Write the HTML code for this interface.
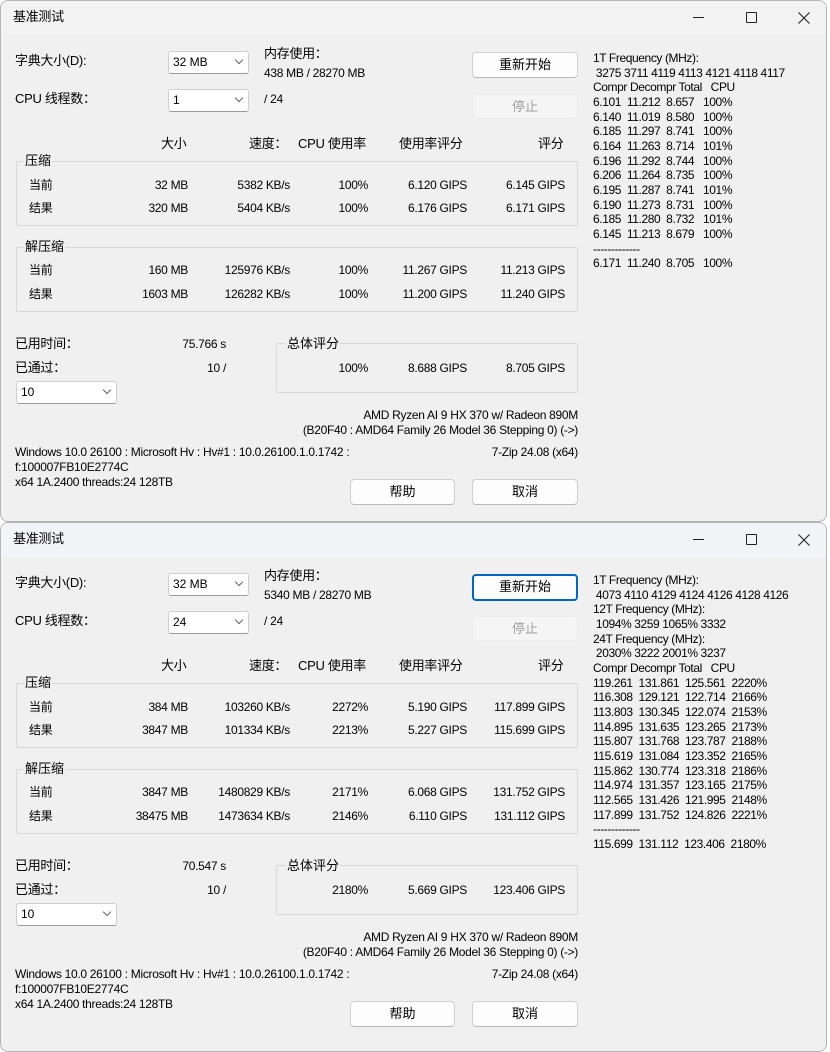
<!DOCTYPE html>
<html><head><meta charset="utf-8"><style>
*{margin:0;padding:0;box-sizing:border-box}
body{width:830px;height:1044px;background:#fff;position:relative;overflow:hidden;font-family:"Liberation Sans","Noto Sans CJK SC",sans-serif;font-size:12px;color:#000}
.win{position:absolute;left:0;width:827px;border:1px solid #b5b5b5;border-radius:8px;background:#f0f0f0;overflow:hidden}
.tb{position:absolute;left:0;top:0;right:0;height:34px;background:#f3f3f3}
.a{position:absolute;white-space:nowrap;line-height:14px;letter-spacing:-0.3px}
.r{text-align:right}
.cb{position:absolute;background:#fff;border:1px solid #cfcfcf;border-bottom-color:#999;border-radius:3px}
.cb span{position:absolute;left:4px;top:3px;line-height:14px}
.cb i{position:absolute;right:6px;top:5px;width:6px;height:6px;border-right:1px solid #666;border-bottom:1px solid #666;transform:rotate(45deg)}
.btn{position:absolute;background:#fdfdfd;border:1px solid #d0d0d0;border-bottom-color:#b8b8b8;border-radius:4px;text-align:center;line-height:24px;font-size:13px}
.dis{background:#f5f5f5;border-color:#ececec;color:#a0a0a0}
.foc{border:2px solid #0067c0;line-height:22px}
.gb{position:absolute;border:1px solid #d8d8d8;border-radius:2px}
.gl{position:absolute;background:#f0f0f0;padding:0 1px;line-height:14px;font-size:13px}
.mono{position:absolute;left:592px;line-height:14.65px;white-space:pre;letter-spacing:-0.4px}
.x{position:absolute;left:797px;top:11px}
</style></head><body>

<!-- TOP WINDOW -->
<div class="win" style="top:0;height:522px">
<div class="tb"></div>
<div class="a" style="left:12px;top:9px;font-size:13px">基准测试</div>
<div class="a" style="left:692px;top:16px;width:11px;border-top:1px solid #222"></div>
<div class="a" style="left:745px;top:11px;width:11px;height:11px;border:1px solid #222;border-radius:1px"></div>
<svg class="x" width="12" height="12" viewBox="0 0 12 12"><path d="M0.5 0.5L11.5 11.5M11.5 0.5L0.5 11.5" stroke="#222" stroke-width="1.1"/></svg>

<div class="a" style="left:14px;top:53px;font-size:13px">字典大小(D):</div>
<div class="cb" style="left:167px;top:50px;width:81px;height:23px"><span>32 MB</span><i></i></div>
<div class="a" style="left:263px;top:46px;font-size:13px">内存使用：</div>
<div class="a" style="left:263px;top:65px">438 MB / 28270 MB</div>
<div class="a" style="left:14px;top:91px;font-size:13px">CPU 线程数：</div>
<div class="cb" style="left:167px;top:88px;width:81px;height:23px"><span>1</span><i></i></div>
<div class="a" style="left:263px;top:91px">/ 24</div>
<div class="btn" style="left:471px;top:51px;width:106px;height:26px">重新开始</div>
<div class="btn dis" style="left:471px;top:93px;width:106px;height:25px">停止</div>

<div class="a" style="left:160px;top:136px;font-size:13px">大小</div>
<div class="a" style="left:248px;top:136px;font-size:13px">速度：</div>
<div class="a" style="left:297px;top:136px;font-size:13px">CPU 使用率</div>
<div class="a" style="left:398px;top:136px;font-size:13px">使用率评分</div>
<div class="a" style="left:537px;top:136px;font-size:13px">评分</div>

<div class="gb" style="left:15px;top:160px;width:562px;height:65px"></div>
<div class="gl" style="left:23px;top:153px">压缩</div>
<div class="a" style="left:28px;top:177px">当前</div>
<div class="a r" style="left:100px;top:177px;width:87px">32 MB</div>
<div class="a r" style="left:190px;top:177px;width:99px">5382 KB/s</div>
<div class="a r" style="left:300px;top:177px;width:67px">100%</div>
<div class="a r" style="left:380px;top:177px;width:86px">6.120 GIPS</div>
<div class="a r" style="left:480px;top:177px;width:84px">6.145 GIPS</div>
<div class="a" style="left:28px;top:200px">结果</div>
<div class="a r" style="left:100px;top:200px;width:87px">320 MB</div>
<div class="a r" style="left:190px;top:200px;width:99px">5404 KB/s</div>
<div class="a r" style="left:300px;top:200px;width:67px">100%</div>
<div class="a r" style="left:380px;top:200px;width:86px">6.176 GIPS</div>
<div class="a r" style="left:480px;top:200px;width:84px">6.171 GIPS</div>

<div class="gb" style="left:15px;top:246px;width:562px;height:65px"></div>
<div class="gl" style="left:23px;top:239px">解压缩</div>
<div class="a" style="left:28px;top:262px">当前</div>
<div class="a r" style="left:100px;top:262px;width:87px">160 MB</div>
<div class="a r" style="left:190px;top:262px;width:99px">125976 KB/s</div>
<div class="a r" style="left:300px;top:262px;width:67px">100%</div>
<div class="a r" style="left:380px;top:262px;width:86px">11.267 GIPS</div>
<div class="a r" style="left:480px;top:262px;width:84px">11.213 GIPS</div>
<div class="a" style="left:28px;top:286px">结果</div>
<div class="a r" style="left:100px;top:286px;width:87px">1603 MB</div>
<div class="a r" style="left:190px;top:286px;width:99px">126282 KB/s</div>
<div class="a r" style="left:300px;top:286px;width:67px">100%</div>
<div class="a r" style="left:380px;top:286px;width:86px">11.200 GIPS</div>
<div class="a r" style="left:480px;top:286px;width:84px">11.240 GIPS</div>

<div class="a" style="left:14px;top:336px;font-size:13px">已用时间：</div>
<div class="a r" style="left:120px;top:336px;width:105px">75.766 s</div>
<div class="a" style="left:14px;top:360px;font-size:13px">已通过：</div>
<div class="a r" style="left:120px;top:360px;width:105px">10 /</div>
<div class="cb" style="left:15px;top:380px;width:101px;height:23px"><span>10</span><i></i></div>
<div class="gb" style="left:275px;top:342px;width:302px;height:50px"></div>
<div class="gl" style="left:285px;top:336px">总体评分</div>
<div class="a r" style="left:300px;top:360px;width:67px">100%</div>
<div class="a r" style="left:380px;top:360px;width:86px">8.688 GIPS</div>
<div class="a r" style="left:480px;top:360px;width:84px">8.705 GIPS</div>

<div class="a r" style="left:277px;top:407px;width:300px">AMD Ryzen AI 9 HX 370 w/ Radeon 890M</div>
<div class="a r" style="left:227px;top:422px;width:350px">(B20F40 : AMD64 Family 26 Model 36 Stepping 0) (-&gt;)</div>
<div class="a" style="left:14px;top:444px">Windows 10.0 26100 : Microsoft Hv : Hv#1 : 10.0.26100.1.0.1742 :</div>
<div class="a r" style="left:427px;top:444px;width:150px">7-Zip 24.08 (x64)</div>
<div class="a" style="left:14px;top:459px">f:100007FB10E2774C</div>
<div class="a" style="left:14px;top:474px">x64 1A.2400 threads:24 128TB</div>
<div class="btn" style="left:349px;top:478px;width:105px;height:26px">帮助</div>
<div class="btn" style="left:471px;top:478px;width:106px;height:26px">取消</div>

<div class="mono" style="top:50px">1T Frequency (MHz):
 3275 3711 4119 4113 4121 4118 4117
Compr Decompr Total   CPU
6.101  11.212  8.657   100%
6.140  11.019  8.580   100%
6.185  11.297  8.741   100%
6.164  11.263  8.714   101%
6.196  11.292  8.744   100%
6.206  11.264  8.735   100%
6.195  11.287  8.741   101%
6.190  11.273  8.731   100%
6.185  11.280  8.732   101%
6.145  11.213  8.679   100%
-------------
6.171  11.240  8.705   100%</div>
</div>

<!-- BOTTOM WINDOW -->
<div class="win" style="top:522px;height:530px">
<div class="tb" style="background:#f3f4f8"></div>
<div class="a" style="left:12px;top:9px;font-size:13px">基准测试</div>
<div class="a" style="left:692px;top:16px;width:11px;border-top:1px solid #222"></div>
<div class="a" style="left:745px;top:11px;width:11px;height:11px;border:1px solid #222;border-radius:1px"></div>
<svg class="x" width="12" height="12" viewBox="0 0 12 12"><path d="M0.5 0.5L11.5 11.5M11.5 0.5L0.5 11.5" stroke="#222" stroke-width="1.1"/></svg>

<div class="a" style="left:14px;top:53px;font-size:13px">字典大小(D):</div>
<div class="cb" style="left:167px;top:50px;width:81px;height:23px"><span>32 MB</span><i></i></div>
<div class="a" style="left:263px;top:46px;font-size:13px">内存使用：</div>
<div class="a" style="left:263px;top:65px">5340 MB / 28270 MB</div>
<div class="a" style="left:14px;top:91px;font-size:13px">CPU 线程数：</div>
<div class="cb" style="left:167px;top:88px;width:81px;height:23px"><span>24</span><i></i></div>
<div class="a" style="left:263px;top:91px">/ 24</div>
<div class="btn foc" style="left:471px;top:51px;width:106px;height:27px">重新开始</div>
<div class="btn dis" style="left:471px;top:93px;width:106px;height:25px">停止</div>

<div class="a" style="left:160px;top:136px;font-size:13px">大小</div>
<div class="a" style="left:248px;top:136px;font-size:13px">速度：</div>
<div class="a" style="left:297px;top:136px;font-size:13px">CPU 使用率</div>
<div class="a" style="left:398px;top:136px;font-size:13px">使用率评分</div>
<div class="a" style="left:537px;top:136px;font-size:13px">评分</div>

<div class="gb" style="left:15px;top:160px;width:562px;height:65px"></div>
<div class="gl" style="left:23px;top:153px">压缩</div>
<div class="a" style="left:28px;top:177px">当前</div>
<div class="a r" style="left:100px;top:177px;width:87px">384 MB</div>
<div class="a r" style="left:190px;top:177px;width:99px">103260 KB/s</div>
<div class="a r" style="left:300px;top:177px;width:67px">2272%</div>
<div class="a r" style="left:380px;top:177px;width:86px">5.190 GIPS</div>
<div class="a r" style="left:470px;top:177px;width:94px">117.899 GIPS</div>
<div class="a" style="left:28px;top:200px">结果</div>
<div class="a r" style="left:100px;top:200px;width:87px">3847 MB</div>
<div class="a r" style="left:190px;top:200px;width:99px">101334 KB/s</div>
<div class="a r" style="left:300px;top:200px;width:67px">2213%</div>
<div class="a r" style="left:380px;top:200px;width:86px">5.227 GIPS</div>
<div class="a r" style="left:470px;top:200px;width:94px">115.699 GIPS</div>

<div class="gb" style="left:15px;top:246px;width:562px;height:65px"></div>
<div class="gl" style="left:23px;top:239px">解压缩</div>
<div class="a" style="left:28px;top:262px">当前</div>
<div class="a r" style="left:100px;top:262px;width:87px">3847 MB</div>
<div class="a r" style="left:190px;top:262px;width:99px">1480829 KB/s</div>
<div class="a r" style="left:300px;top:262px;width:67px">2171%</div>
<div class="a r" style="left:380px;top:262px;width:86px">6.068 GIPS</div>
<div class="a r" style="left:470px;top:262px;width:94px">131.752 GIPS</div>
<div class="a" style="left:28px;top:286px">结果</div>
<div class="a r" style="left:100px;top:286px;width:87px">38475 MB</div>
<div class="a r" style="left:190px;top:286px;width:99px">1473634 KB/s</div>
<div class="a r" style="left:300px;top:286px;width:67px">2146%</div>
<div class="a r" style="left:380px;top:286px;width:86px">6.110 GIPS</div>
<div class="a r" style="left:470px;top:286px;width:94px">131.112 GIPS</div>

<div class="a" style="left:14px;top:336px;font-size:13px">已用时间：</div>
<div class="a r" style="left:120px;top:336px;width:105px">70.547 s</div>
<div class="a" style="left:14px;top:360px;font-size:13px">已通过：</div>
<div class="a r" style="left:120px;top:360px;width:105px">10 /</div>
<div class="cb" style="left:15px;top:380px;width:101px;height:23px"><span>10</span><i></i></div>
<div class="gb" style="left:275px;top:342px;width:302px;height:50px"></div>
<div class="gl" style="left:285px;top:336px">总体评分</div>
<div class="a r" style="left:300px;top:360px;width:67px">2180%</div>
<div class="a r" style="left:380px;top:360px;width:86px">5.669 GIPS</div>
<div class="a r" style="left:470px;top:360px;width:94px">123.406 GIPS</div>

<div class="a r" style="left:277px;top:407px;width:300px">AMD Ryzen AI 9 HX 370 w/ Radeon 890M</div>
<div class="a r" style="left:227px;top:422px;width:350px">(B20F40 : AMD64 Family 26 Model 36 Stepping 0) (-&gt;)</div>
<div class="a" style="left:14px;top:444px">Windows 10.0 26100 : Microsoft Hv : Hv#1 : 10.0.26100.1.0.1742 :</div>
<div class="a r" style="left:427px;top:444px;width:150px">7-Zip 24.08 (x64)</div>
<div class="a" style="left:14px;top:459px">f:100007FB10E2774C</div>
<div class="a" style="left:14px;top:474px">x64 1A.2400 threads:24 128TB</div>
<div class="btn" style="left:349px;top:478px;width:105px;height:26px">帮助</div>
<div class="btn" style="left:471px;top:478px;width:106px;height:26px">取消</div>

<div class="mono" style="top:50px">1T Frequency (MHz):
 4073 4110 4129 4124 4126 4128 4126
12T Frequency (MHz):
 1094% 3259 1065% 3332
24T Frequency (MHz):
 2030% 3222 2001% 3237
Compr Decompr Total   CPU
119.261  131.861  125.561  2220%
116.308  129.121  122.714  2166%
113.803  130.345  122.074  2153%
114.895  131.635  123.265  2173%
115.807  131.768  123.787  2188%
115.619  131.084  123.352  2165%
115.862  130.774  123.318  2186%
114.974  131.357  123.165  2175%
112.565  131.426  121.995  2148%
117.899  131.752  124.826  2221%
-------------
115.699  131.112  123.406  2180%</div>
</div>
</body></html>
